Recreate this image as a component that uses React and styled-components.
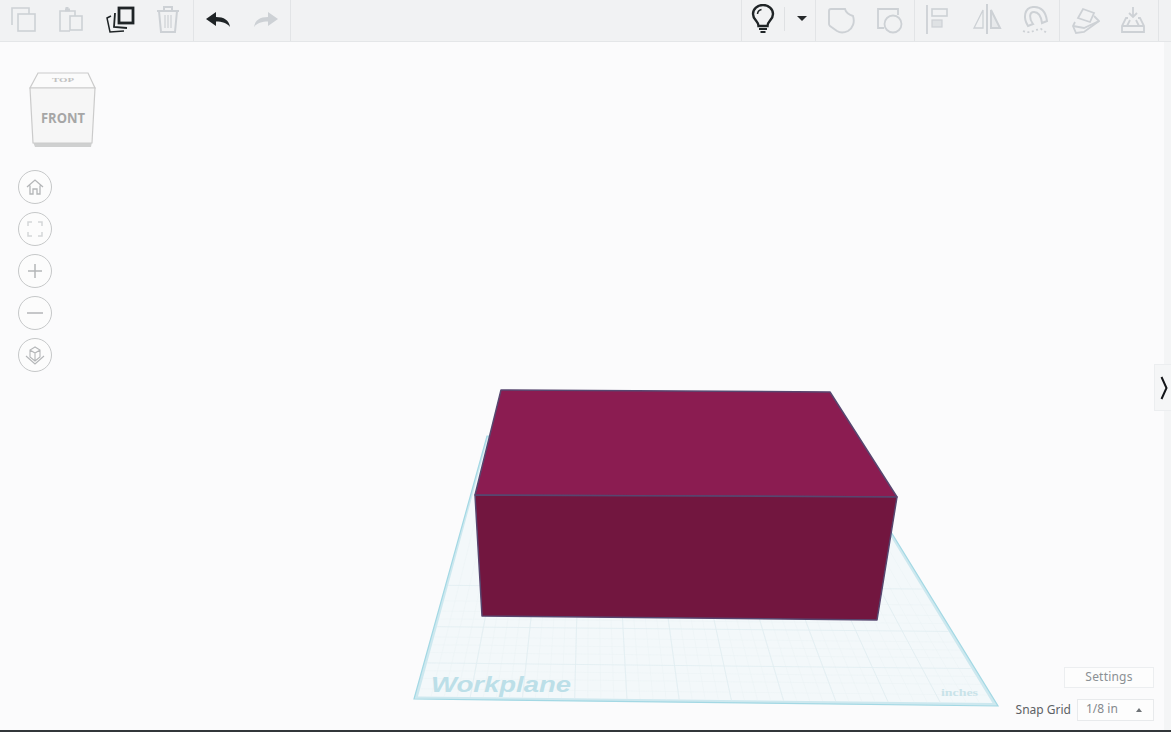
import React from 'react';
import styled, { createGlobalStyle } from 'styled-components';

const GlobalStyle = createGlobalStyle`
  html, body {
    margin: 0;
    height: 100%;
    overflow: hidden;
    background: #fbfbfc;
    font-family: "Noto Sans", "Open Sans", sans-serif;
  }
`;

const Page = styled.div`
  display: flex;
  flex-direction: column;
  width: 1171px;
  height: 732px;
`;

const Toolbar = styled.header`
  display: flex;
  flex: none;
  height: 42px;
  box-sizing: border-box;
  padding-right: 12px;
  background: #f1f2f3;
  border-bottom: 1px solid #e4e6e8;
`;

const ToolGroup = styled.div`
  display: flex;
  align-items: flex-start;
  height: 41px;
  padding: 0 ${p => p.$pad || 0}px;
  padding-right: ${p => p.$padRight || p.$pad || 0}px;
  border-right: 1px solid #e2e4e6;
  border-left: ${p => (p.$first ? '1px solid #e2e4e6' : 'none')};
`;

const Spacer = styled.div`
  flex: 1;
`;

const ToolButton = styled.button`
  display: flex;
  align-items: center;
  justify-content: center;
  width: ${p => p.$w || 48}px;
  height: 37px;
  padding: 0;
  border: none;
  background: none;
  color: ${p => (p.$active ? '#1f2426' : '#cdd1d5')};
`;

const DropSep = styled.span`
  width: 1px;
  height: 24px;
  margin: 7px 3px 0 0;
  background: #dfe1e3;
`;

const Viewport = styled.main`
  display: flex;
  flex: 1;
  min-height: 0;
`;

const Canvas = styled.div`
  position: relative;
  flex: 1;
  background: #fbfbfc;
`;

const SideStrip = styled.div`
  flex: none;
  width: 7px;
  background: #f4f5f6;
`;

const Scene = styled.svg`
  position: absolute;
  top: 0;
  left: 0;
  width: 1164px;
  height: 688px;
`;

const ViewCube = styled.svg`
  position: absolute;
  top: 26px;
  left: 24px;
  width: 78px;
  height: 84px;
`;

const NavColumn = styled.nav`
  position: absolute;
  top: 128px;
  left: 18px;
  display: flex;
  flex-direction: column;
  gap: 8px;
`;

const NavButton = styled.button`
  display: flex;
  align-items: center;
  justify-content: center;
  width: 34px;
  height: 34px;
  padding: 0;
  border: 1.5px solid #c6c8c9;
  border-radius: 50%;
  background: #fcfcfc;
  color: ${p => (p.$faint ? '#d4d6d8' : '#b4b6b8')};
`;

const PanelTab = styled.button`
  position: absolute;
  top: 322px;
  right: -7px;
  z-index: 1;
  display: flex;
  align-items: center;
  justify-content: center;
  box-sizing: border-box;
  width: 17px;
  height: 47px;
  padding: 0 0 0 1px;
  border: 1px solid #eceef0;
  border-right: none;
  background: #f5f6f7;
  color: #14161a;
`;

const GridControls = styled.div`
  position: absolute;
  right: 10px;
  bottom: 9px;
  display: flex;
  flex-direction: column;
  align-items: flex-end;
  gap: 11px;
  font-size: 12px;
`;

const SettingsButton = styled.button`
  width: 90px;
  height: 21px;
  padding: 0 0 2px;
  border: 1px solid #eceef0;
  background: #fdfdfd;
  color: #8b9094;
  font: inherit;
  letter-spacing: 0.2px;
`;

const SnapRow = styled.div`
  display: flex;
  align-items: center;
  gap: 6px;
  color: #5c6165;
  line-height: 18px;
`;

const SnapSelect = styled.div`
  display: flex;
  align-items: center;
  justify-content: space-between;
  box-sizing: border-box;
  width: 77px;
  height: 22px;
  padding: 0 11px 2px 8px;
  border: 1px solid #e8eaec;
  background: #fdfdfd;
  color: #85898d;
`;

const SelectCaret = styled.span`
  width: 0;
  height: 0;
  margin-top: 2px;
  border-left: 3.5px solid transparent;
  border-right: 3.5px solid transparent;
  border-bottom: 4px solid #6f7377;
`;

const BottomEdge = styled.div`
  flex: none;
  height: 2px;
  background: #33373a;
`;

const Icon = ({ size = 30, box = 30, children }) => (
  <svg width={size} height={size} viewBox={`0 0 ${box} ${box}`} fill="none" stroke="currentColor" strokeWidth="1.6">
    {children}
  </svg>
);

const toolIcons = {
  copy: <><path d="M3 21V4h17v6" /><rect x="9" y="10" width="17" height="17" /></>,
  paste: <><path d="M13 27H3V7h15v5" /><path d="M8 6h5M10 3v4" strokeWidth="3" /><rect x="13" y="12" width="12" height="14" /></>,
  stack: <>
    <rect x="14" y="4" width="14" height="15" strokeWidth="2.8" />
    <path d="M10 9 9 23 22 24" strokeWidth="1.8" />
    <path d="M6 12 2 14 5 28 19 27" strokeWidth="1.5" />
  </>,
  trash: <>
    <path d="M6 7 8 28h14l2-21" strokeWidth="2" />
    <path d="M4 7h22M11 6V3h8v3" strokeWidth="2" />
    <path d="M12 11v13M15 11v13M18 11v13" strokeWidth="1.2" />
  </>,
  undo: <path fill="currentColor" stroke="none" d="M3 15 13 8v5c8 0 13 3 14 10-3-4-8-5.500-14-5.500V22Z" />,
  redo: <path fill="currentColor" stroke="none" d="M27 15 17 8v5c-8 0-13 3-14 10 3-4 8-5.500 14-5.500V22Z" />,
  bulb: <>
    <path d="M10.500 22c0-5-5.500-6-5.500-12a10 9 0 0 1 20 0c0 6-5.500 7-5.500 12Z" strokeWidth="2.400" />
    <path d="M11 25h8M12.500 28h5" strokeWidth="2.200" />
    <path d="M9.500 10a5 5 0 0 1 4-4.500" strokeWidth="1.500" />
  </>,
  union: <path strokeWidth="1.900" d="M3 7Q3 5 5 5H19C20 9 24 11 27 12 29 18 27 24 22 27 18 29 14 29 11 27L4 22Q3 21 3 20Z" />,
  subtract: <><path strokeWidth="1.800" d="M10 24H4V5h20v6" /><circle cx="19" cy="20" r="8.500" strokeWidth="1.800" /></>,
  align: <>
    <path d="M3 1v30" strokeWidth="1.800" />
    <rect x="8" y="5" width="15" height="7" strokeWidth="1.600" />
    <rect x="8" y="16" width="10" height="7" fill="currentColor" fillOpacity="0.5" strokeWidth="1.200" />
  </>,
  mirror: <>
    <path d="M15 0v31" strokeWidth="2" />
    <path d="M11 6 2 24h9Z" strokeWidth="1.300" />
    <path d="M19 6v18h9Z" fill="currentColor" fillOpacity="0.25" strokeWidth="2" />
  </>,
  magnet: <>
    <path d="M8 22C3 14 4 4 13 3 21 2 26 8 27 17L22 19C21 12 18 8 14 8 9 8 9 15 13 20Z" strokeWidth="2" />
    <path d="M3 27c5 2 9 1 13-1l5-1 6 4" strokeWidth="1.800" strokeDasharray="2 2.500" />
  </>,
  plane: <>
    <path d="M13 5 24 9 20 18 8 14Z" strokeWidth="1.800" />
    <path d="M5 18 3 22 6 29 14 28 29 17 24 12" strokeWidth="1.800" />
    <path d="M3 22 14 24 29 17" strokeWidth="1.800" />
  </>,
  drop: <>
    <path d="M15 3v10M11 9l4 4 4-4" strokeWidth="1.800" />
    <path d="M10 14H8L4 22v6h22v-6l-4-8h-2M4 22h22M9 22l3-6M21 22l-3-6" strokeWidth="1.800" />
  </>,
};

const ToolIcon = ({ name }) => <Icon>{toolIcons[name]}</Icon>;

const Caret = () => (
  <svg width="12" height="7" viewBox="0 0 12 7"><path d="M1 1h10L6 6Z" fill="#26292b" /></svg>
);

const navItems = [
  { id: 'home', icon: <path d="M3 11 11 4l8 7M6 9.500V18h3v-5h4v5h3V9.500" strokeWidth="1.300" /> },
  { id: 'fit', faint: true, icon: <path d="M4 8V4h4M14 4h4v4M18 14v4h-4M8 18H4v-4" strokeWidth="1.500" /> },
  { id: 'in', icon: <path d="M11 4v14M4 11h14" strokeWidth="1.500" /> },
  { id: 'out', icon: <path d="M3 11h16" strokeWidth="1.500" /> },
  {
    id: 'ortho',
    icon: <path d="M11 3 6 6v7l5 4 5-4V6ZM6 6l5 3 5-3M11 9v8M2 12l9 8 9-8" strokeWidth="1.100" />,
  },
];

// workplane corners in scene coordinates (page y minus 42)
const wp = { tl: [487, 394], tr: [832, 394], br: [998, 664], bl: [414, 657] };
const wpInner = { tl: [488, 396], tr: [830.5, 396], br: [992.500, 661], bl: [418, 654.500] };

const lerp = (a, b, t) => [a[0] + (b[0] - a[0]) * t, a[1] + (b[1] - a[1]) * t];

const gridLines = (across, down) => {
  const lines = [];
  for (let i = 1; i < across; i++) {
    const t = i / across;
    lines.push([lerp(wpInner.bl, wpInner.br, t), lerp(wpInner.tl, wpInner.tr, t)]);
  }
  down.forEach(t => {
    lines.push([lerp(wpInner.bl, wpInner.tl, t), lerp(wpInner.br, wpInner.tr, t)]);
  });
  return lines;
};

const toPoints = c => [c.tl, c.tr, c.br, c.bl].map(p => p.join(',')).join(' ');

const GridLayer = ({ lines, color, width }) =>
  lines.map(([a, b], i) => (
    <line key={i} x1={a[0]} y1={a[1]} x2={b[0]} y2={b[1]} stroke={color} strokeWidth={width} />
  ));

const App = () => (
  <Page>
    <GlobalStyle />
    <Toolbar>
      <ToolGroup $padRight={1}>
        <ToolButton><ToolIcon name="copy" /></ToolButton>
        <ToolButton><ToolIcon name="paste" /></ToolButton>
        <ToolButton $active><ToolIcon name="stack" /></ToolButton>
        <ToolButton><ToolIcon name="trash" /></ToolButton>
      </ToolGroup>
      <ToolGroup>
        <ToolButton $active><ToolIcon name="undo" /></ToolButton>
        <ToolButton><ToolIcon name="redo" /></ToolButton>
      </ToolGroup>
      <Spacer />
      <ToolGroup $first>
        <ToolButton $active $w={42}><ToolIcon name="bulb" /></ToolButton>
        <DropSep />
        <ToolButton $w={27}><Caret /></ToolButton>
      </ToolGroup>
      <ToolGroup $pad={1}>
        <ToolButton><ToolIcon name="union" /></ToolButton>
        <ToolButton><ToolIcon name="subtract" /></ToolButton>
      </ToolGroup>
      <ToolGroup>
        <ToolButton><ToolIcon name="align" /></ToolButton>
        <ToolButton><ToolIcon name="mirror" /></ToolButton>
        <ToolButton><ToolIcon name="magnet" /></ToolButton>
      </ToolGroup>
      <ToolGroup $pad={1}>
        <ToolButton><ToolIcon name="plane" /></ToolButton>
        <ToolButton><ToolIcon name="drop" /></ToolButton>
      </ToolGroup>
    </Toolbar>

    <Viewport>
      <Canvas>
        <Scene viewBox="0 0 1164 688">
          <polygon points={toPoints(wp)} fill="#cde8ef" stroke="#a3d8e4" strokeWidth="1.200" />
          <polygon points={toPoints(wpInner)} fill="#f3f8fa" />
          <GridLayer lines={gridLines(44, [0.03, 0.07, 0.1, 0.17, 0.2, 0.23, 0.3, 0.33, 0.37])} color="#ebf3f5" width="0.500" />
          <GridLayer lines={gridLines(11, [0.13, 0.27, 0.43])} color="#e1eef1" width="0.800" />
          <text
            x="431"
            y="650"
            textLength="140"
            lengthAdjust="spacingAndGlyphs"
            fontFamily="Liberation Sans"
            fontWeight="700"
            fontStyle="italic"
            fontSize="22"
            fill="#bcdfe8"
          >
            Workplane
          </text>
          <text
            x="941"
            y="654"
            textLength="37"
            lengthAdjust="spacingAndGlyphs"
            fontFamily="Liberation Serif"
            fontWeight="700"
            fontSize="11"
            fill="#c9e3e9"
          >
            inches
          </text>
          <polygon
            points="501,348 830,350 897,455 475,453"
            fill="#8b1c51"
            stroke="#57466f"
            strokeWidth="1.500"
            strokeLinejoin="round"
          />
          <polygon
            points="475,453 897,455 877,578 482,574"
            fill="#72163f"
            stroke="#57466f"
            strokeWidth="1.500"
            strokeLinejoin="round"
          />
        </Scene>

        <ViewCube viewBox="24 68 78 84">
          <polygon points="33,142 92,142 91,147 35,147" fill="#cfd0d0" />
          <polygon points="38,73 88,73 95,88 30,88" fill="#fbfbfb" stroke="#cbcbcb" strokeWidth="1.200" />
          <polygon points="30,88 95,88 92,143 33,143" fill="#f6f6f6" stroke="#cbcbcb" strokeWidth="1.200" />
          <text
            x="52"
            y="82"
            textLength="22"
            lengthAdjust="spacingAndGlyphs"
            fontFamily="Liberation Serif"
            fontWeight="700"
            fontSize="7"
            fill="#c2c2c2"
          >
            TOP
          </text>
          <text
            x="41"
            y="122.500"
            textLength="44"
            lengthAdjust="spacingAndGlyphs"
            fontFamily="Open Sans"
            fontWeight="700"
            fontSize="15"
            fill="#a6a6a6"
          >
            FRONT
          </text>
        </ViewCube>

        <NavColumn>
          {navItems.map(item => (
            <NavButton key={item.id} $faint={item.faint}>
              <Icon size={22} box={22}>{item.icon}</Icon>
            </NavButton>
          ))}
        </NavColumn>

        <PanelTab>
          <svg width="8" height="24" viewBox="0 0 8 24" fill="none" stroke="currentColor" strokeWidth="2">
            <path d="M1.500 1 6.500 12 1.500 23" />
          </svg>
        </PanelTab>

        <GridControls>
          <SettingsButton>Settings</SettingsButton>
          <SnapRow>
            Snap Grid
            <SnapSelect>
              1/8 in
              <SelectCaret />
            </SnapSelect>
          </SnapRow>
        </GridControls>
      </Canvas>
      <SideStrip />
    </Viewport>
    <BottomEdge />
  </Page>
);

export default App;
